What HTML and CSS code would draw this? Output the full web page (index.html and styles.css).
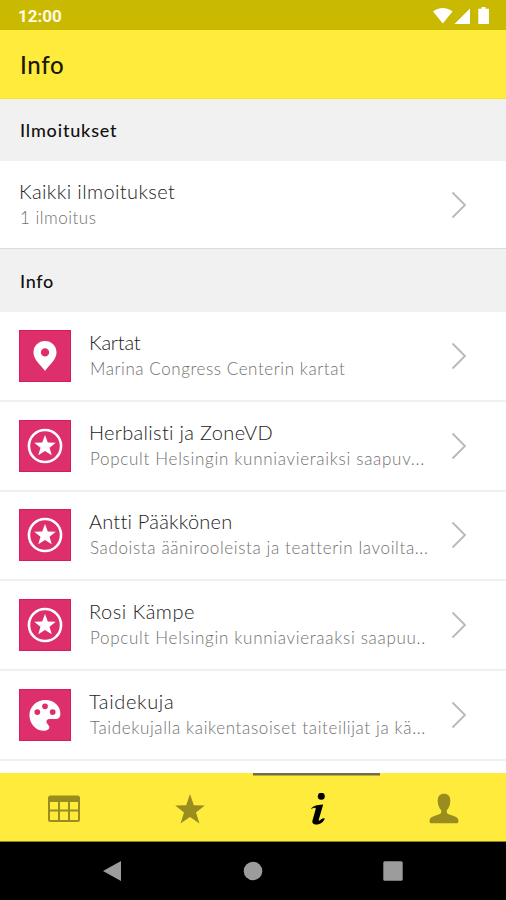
FILE: index.html
```html
<!DOCTYPE html>
<html lang="fi">
<head>
<meta charset="utf-8">
<title>Info</title>
<link rel="stylesheet" href="styles.css">
</head>
<body>
<svg class="defs" aria-hidden="true">
  <symbol id="chevron" viewBox="0 0 16 28"><path d="M1.5 1.5 14 14 1.5 26.5" fill="none" stroke="currentColor" stroke-width="1.8"/></symbol>
  <symbol id="pin" viewBox="0 0 52 52"><path fill="#fff" fill-rule="evenodd" d="M26 10.500c-6.800 0-12 5.100-12 11.700 0 7.600 7.700 13.600 12 19.300 4.300-5.700 12-11.700 12-19.300 0-6.600-5.200-11.700-12-11.700zm0 7.500a4.300 4.300 0 1 1 0 8.600 4.300 4.300 0 0 1 0-8.600z"/></symbol>
  <symbol id="badge" viewBox="0 0 52 52"><circle cx="26" cy="26" r="16.700" fill="none" stroke="#fff" stroke-width="2.700"/><path fill="#fff" d="m26 14.600 2.900 7.700 8.300.3-6.500 5.100 2.300 8-7-4.600-7 4.600 2.300-8-6.500-5.100 8.300-.3z"/></symbol>
  <symbol id="palette" viewBox="0 0 52 52"><path fill="#fff" fill-rule="evenodd" d="M26.500 10.500C17 10.500 9.800 17.600 9.800 26.200c0 8.800 7 16.300 15 16.300 3.300 0 5.700-1.400 5.700-4 0-2.200-3-3.200-3-5.600 0-1.600 1.300-2.700 3-2.700h6.500c3.300 0 5-2 5-5.200 0-8.500-6.700-14.500-15.500-14.500zM26 14a3 3 0 1 0 0 6 3 3 0 0 0 0-6zm-8 6a3 3 0 1 0 0 6 3 3 0 0 0 0-6zm16 0a3 3 0 1 0 0 6 3 3 0 0 0 0-6z"/></symbol>
</svg>
<div class="screen">
  <header class="status">
    <span class="clock">12:00</span>
    <svg class="signals" width="56" height="18" viewBox="0 0 56 18" fill="#fff">
      <path d="M0 4.500C5.500-.3 14-.3 19.500 4.500L9.800 16.500z"/>
      <path d="M37 1.500v15.500H21.500z"/>
      <path d="M48.500 0h4v1.800H56V17H45.300V1.800h3.200z"/>
    </svg>
  </header>
  <div class="titlebar"><h1 class="t-main">Info</h1></div>
  <main class="content">
    <h2 class="section"><span class="t-notices">Ilmoitukset</span></h2>
    <div class="row plain">
      <div class="text"><div class="title t1">Kaikki ilmoitukset</div><div class="sub s1">1 ilmoitus</div></div>
      <svg class="chev"><use href="#chevron"/></svg>
    </div>
    <h2 class="section second"><span class="t-info">Info</span></h2>
    <div class="row">
      <svg class="tile"><use href="#pin"/></svg>
      <div class="text"><div class="title t2">Kartat</div><div class="sub s2">Marina Congress Centerin kartat</div></div>
      <svg class="chev"><use href="#chevron"/></svg>
    </div>
    <div class="row">
      <svg class="tile"><use href="#badge"/></svg>
      <div class="text"><div class="title t3">Herbalisti ja ZoneVD</div><div class="sub s3">Popcult Helsingin kunniavieraiksi saapuv...</div></div>
      <svg class="chev"><use href="#chevron"/></svg>
    </div>
    <div class="row">
      <svg class="tile"><use href="#badge"/></svg>
      <div class="text"><div class="title t4">Antti Pääkkönen</div><div class="sub s4">Sadoista äänirooleista ja teatterin lavoilta...</div></div>
      <svg class="chev"><use href="#chevron"/></svg>
    </div>
    <div class="row">
      <svg class="tile"><use href="#badge"/></svg>
      <div class="text"><div class="title t5">Rosi Kämpe</div><div class="sub s5">Popcult Helsingin kunniavieraaksi saapuu..</div></div>
      <svg class="chev"><use href="#chevron"/></svg>
    </div>
    <div class="row">
      <svg class="tile"><use href="#palette"/></svg>
      <div class="text"><div class="title t6">Taidekuja</div><div class="sub s6">Taidekujalla kaikentasoiset taiteilijat ja kä...</div></div>
      <svg class="chev"><use href="#chevron"/></svg>
    </div>
  </main>
  <nav class="tabs">
    <div class="tab"><svg width="32" height="32" viewBox="0 0 32 32"><path fill="currentColor" fill-rule="evenodd" d="M2.500 2.500h27A2.500 2.500 0 0 1 32 5v21.500a2.500 2.500 0 0 1-2.500 2.500h-27A2.500 2.500 0 0 1 0 26.500V5a2.500 2.500 0 0 1 2.500-2.500zM2 9v7.500h8V9zm10 0v7.500h8V9zm10 0v7.500h8V9zM2 18.500V27h8v-8.500zm10 0V27h8v-8.500zm10 0V27h8v-8.500z"/></svg></div>
    <div class="tab"><svg width="32" height="32" viewBox="0 0 32 32"><path fill="currentColor" d="m16 1 3.800 11.300 11 .1-8.800 7 3.500 11.100-9.500-6.600-9.500 6.600L10 19.400l-8.800-7 11-.1z"/></svg></div>
    <div class="tab active"><svg width="32" height="32" viewBox="0 0 32 32"><g fill="currentColor"><circle cx="19.300" cy="3.200" r="3.500"/><path d="M9 15.500c2.200-2.700 5.300-3.500 12.200-4.100l-4.400 15.100c-.3 1.200.2 1.500 1.200.8 1-.8 2-2.100 3.800-2.100l1 .3c-1 3.400-4.500 6-8.300 6-3.600 0-4.700-1.700-3.900-4.500l3-10.500c.4-1.600-.3-2-1.500-1.700l-2.700.9z"/></g></svg></div>
    <div class="tab"><svg width="32" height="32" viewBox="0 0 32 32"><path fill="currentColor" d="M16 .8c4 0 6.300 2.600 6.300 7 0 4.100-1.500 7.700-3.500 9.400v2c0 1 .8 1.500 2 2 3.800 1.200 7.800 2.300 9.200 4.700.6 1 .5 2.500.2 3.400-.2.700-.6 1-1.400 1H3.200c-.8 0-1.200-.3-1.400-1-.3-.9-.4-2.400.2-3.400 1.400-2.400 5.400-3.500 9.200-4.700 1.200-.5 2-1 2-2v-2c-2-1.700-3.500-5.300-3.500-9.400 0-4.400 2.300-7 6.300-7z"/></svg></div>
  </nav>
  <footer class="system">
    <svg width="20" height="22" viewBox="0 0 20 22"><path d="M19 1v20L1 11z"/></svg>
    <svg width="20" height="20" viewBox="0 0 20 20"><circle cx="10" cy="10" r="9.300"/></svg>
    <svg width="20" height="20" viewBox="0 0 20 20"><rect x=".3" y=".3" width="19.400" height="19.400" rx="1.500"/></svg>
  </footer>
</div>
</body>
</html>
```
FILE: styles.css
```css
* { box-sizing: border-box; }
body { margin: 0; background: #fff; font-family: Lato, "Open Sans", sans-serif; color: #111; }
.defs { position: absolute; width: 0; height: 0; }
.screen { width: 506px; height: 900px; display: flex; flex-direction: column; overflow: hidden; }
.status { height: 30px; flex: none; background: #c9b900; display: flex; align-items: center; justify-content: space-between; padding: 1px 17px 0 18px; }
.clock { font: 700 17px/20px Roboto, sans-serif; color: #fffbe0; }
.signals { display: block; }
.titlebar { height: 68.500px; flex: none; background: #ffeb3b; display: flex; align-items: center; padding: 2px 0 0 20px; border-bottom: 1px solid #f7e225; }
h1, h2 { margin: 0; }
h1 { font-size: 24px; line-height: 30px; font-weight: 500; color: #1b1800; letter-spacing: .7px; }
.content { flex: 1; min-height: 0; overflow: hidden; }
.section { height: 62.500px; background: #f1f1f1; display: flex; align-items: center; padding-left: 20px; font-size: 18px; line-height: 24px; font-weight: 500; }
.section.second { height: 63px; }
.t-notices { letter-spacing: .82px; }
.t-info { letter-spacing: .7px; }
.row { height: 89.800px; display: flex; align-items: center; padding: 0 39px 0 19px; border-bottom: 2px solid #f0f0f0; }
.row.plain { height: 88px; border-bottom: 1px solid #dcdcdc; }
.tile { width: 52px; height: 52px; flex: none; background: #dc2f6b; border: 1px solid #d81b60; margin-right: 18px; }
.text { flex: 1; min-width: 0; white-space: nowrap; }
.title { font-size: 20px; line-height: 26px; font-weight: 300; color: #222; }
.sub { font-size: 17px; line-height: 28px; font-weight: 300; color: #707070; padding-left: 1px; }
.t1 { letter-spacing: .38px; }
.t2 { letter-spacing: -.2px; }
.t3 { letter-spacing: .32px; }
.t4 { letter-spacing: .22px; }
.t5 { letter-spacing: .5px; }
.t6 { letter-spacing: .65px; }
.s1 { letter-spacing: .5px; }
.s2 { letter-spacing: .57px; }
.s3, .s5 { letter-spacing: .7px; }
.s4, .s6 { letter-spacing: .63px; }
.chev { width: 16px; height: 28px; flex: none; color: #b8b8b8; }
.tabs { height: 69.500px; flex: none; background: #ffeb3b; display: flex; border-bottom: 1px solid #8d821f; }
.tab { flex: 1; display: flex; align-items: center; justify-content: center; padding: 4px 0 0 2px; color: #9a8d20; }
.tab.active { color: #000; box-shadow: inset 0 2.500px #746d48; padding-left: 3px; }
.system { height: 58px; flex: none; background: #000; display: flex; align-items: center; justify-content: space-between; padding: 0 103px 0 102px; fill: #9c9c9c; }
```
